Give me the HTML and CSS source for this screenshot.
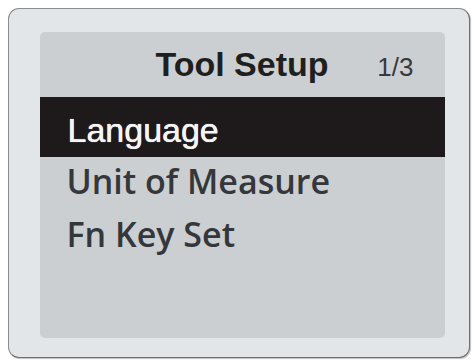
FILE: index.html
```html
<!DOCTYPE html>
<html>
<head>
<meta charset="utf-8">
<link rel="stylesheet" href="styles.css">
</head>
<body>
<div class="bezel">
  <div class="screen">
    <div class="header">
      <span class="spacer"></span>
      <span class="title">Tool Setup</span>
      <span class="page">1/3</span>
    </div>
    <div class="item selected">Language</div>
    <div class="item">Unit of Measure</div>
    <div class="item">Fn Key Set</div>
  </div>
</div>
</body>
</html>
```
FILE: styles.css
```css
html, body {
  margin: 0;
  padding: 0;
  background: #ffffff;
}
body {
  width: 474px;
  height: 360px;
  padding: 8px 4px 2px 8px;
  box-sizing: border-box;
}
.bezel {
  box-sizing: border-box;
  width: 462px;
  height: 350px;
  border: 1.5px solid #8a8d90;
  border-right-color: #6d7073;
  border-bottom-color: #6d7073;
  border-radius: 11px;
  background: #e3e6e8;
  padding: 22.5px 24.5px 19.5px 30.5px;
  box-shadow: 1px 1px 1px rgba(0,0,0,0.25);
}
.screen {
  height: 100%;
  background: #cbcfd2;
  border-radius: 5px;
  display: flex;
  flex-direction: column;
  overflow: hidden;
}
.header {
  display: grid;
  grid-template-columns: 1fr auto 1fr;
  align-items: baseline;
  height: 65px;
  line-height: 65px;
  font-family: "Liberation Sans", Arial, sans-serif;
}
.title {
  font-size: 34px;
  font-weight: bold;
  color: #1f1f20;
}
.page {
  justify-self: end;
  padding-right: 31px;
  font-size: 26px;
  color: #38393b;
}
.item {
  font-family: "Open Sans", sans-serif;
  font-size: 34px;
  font-weight: 600;
  line-height: 49px;
  padding: 0 0 4px 27px;
  color: #35373a;
  white-space: nowrap;
}
.item.selected {
  background: #1e1a1b;
  color: #f4f4f4;
  font-family: "Liberation Sans", Arial, sans-serif;
  font-weight: normal;
  font-size: 34px;
  line-height: 38px;
  padding: 14px 0 8px 28px;
  text-shadow: 0 0 1px rgba(255,255,255,0.7), 0 0 0.5px #fff;
}
```
